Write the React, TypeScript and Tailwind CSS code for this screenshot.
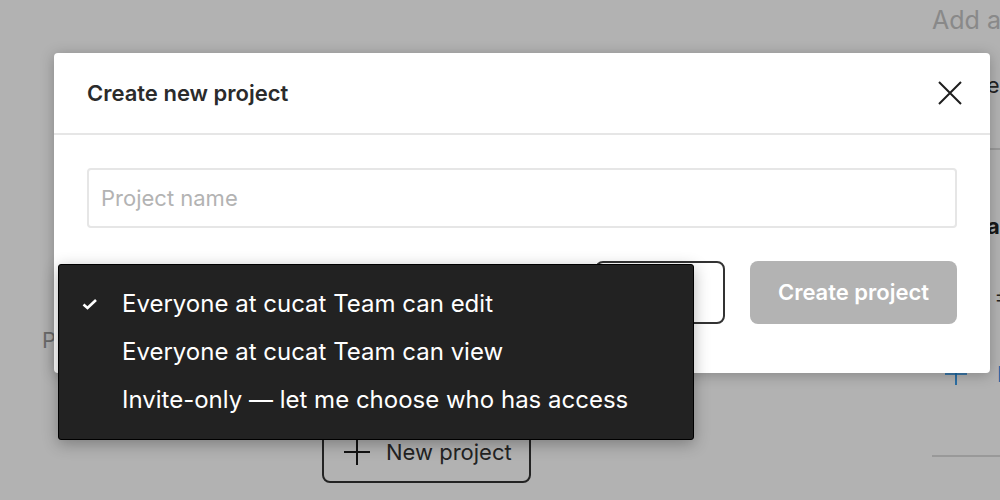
import React from 'react';

const Check = () => (
  <svg width="16" height="12" viewBox="0 0 16 12" fill="none">
    <path d="M1.5 6.5 L5.5 10 L14 2" stroke="white" strokeWidth="2.6" strokeLinejoin="miter" />
  </svg>
);

const Plus = ({ color = '#1a1a1a', size = 26 }: { color?: string; size?: number }) => (
  <svg width={size} height={size} viewBox="0 0 26 26" fill="none" className="shrink-0">
    <path d="M13 0 V26 M0 13 H26" stroke={color} strokeWidth="2" />
  </svg>
);

const CloseIcon = () => (
  <svg width="24" height="24" viewBox="0 0 24 24" fill="none">
    <path d="M1 1 L23 23 M23 1 L1 23" stroke="#1e1e1e" strokeWidth="2" />
  </svg>
);

const options = [
  { label: 'Everyone at cucat Team can edit', checked: true },
  { label: 'Everyone at cucat Team can view', checked: false },
  { label: 'Invite-only — let me choose who has access', checked: false },
];

export default function App() {
  return (
    <div
      className="relative w-[1000px] h-[500px] overflow-hidden bg-white"
      style={{ fontFamily: 'Inter, "Noto Sans", sans-serif' }}
    >
      {/* page behind the dialog */}
      <div className="flex h-full">
        <div className="flex-1 flex flex-col pt-[328px] pl-[42px]">
          <div className="text-[22px] text-[#9a9a9a] leading-[24px]">Projects</div>
          <div className="mt-[69px] ml-[280px] w-[209px] h-[62px] border-2 border-[#333] rounded-[8px] flex items-center pl-[20px] gap-[16px]">
            <Plus />
            <span className="text-[22px] text-[#333]">New project</span>
          </div>
        </div>
        <div className="w-[68px] shrink-0 flex flex-col overflow-hidden whitespace-nowrap">
          <div className="mt-[5px] text-[25px] text-[#c4c4c4] leading-[30px]">Add a description</div>
          <div className="mt-[38px] ml-[35px] text-[22px] text-[#333] leading-[24px]">Members</div>
          <div className="mt-[51px] h-[2px] bg-[#dcdcdc]" />
          <div className="mt-[64px] ml-[42px] text-[22px] font-bold text-[#222] leading-[24px]">Tab</div>
          <div className="mt-[46px] ml-[63px] text-[18px] text-[#333] leading-[24px]">±</div>
          <div className="mt-[54px] flex items-center gap-[30px] pl-[13px]">
            <Plus color="#1e8fe8" size={22} />
            <span className="text-[22px] text-[#1e8fe8] leading-[24px]">Invite</span>
          </div>
          <div className="mt-[69px] h-[2px] bg-[#dcdcdc]" />
        </div>
      </div>

      {/* overlay */}
      <div className="absolute inset-0 bg-black/30" />

      {/* dialog */}
      <div className="absolute left-[54px] top-[53px] w-[936px] h-[320px] bg-white rounded-[4px] shadow-[0_2px_14px_rgba(0,0,0,0.25)] flex flex-col">
        <div className="h-[82px] flex items-center justify-between pl-[33px] pr-[28px] border-b-2 border-[#e6e6e6]">
          <h2 className="text-[22px] font-semibold text-[#2b2b2b]">Create new project</h2>
          <CloseIcon />
        </div>
        <div className="px-[33px] pt-[33px]">
          <div className="h-[60px] border-2 border-[#e6e6e6] rounded-[4px] flex items-center pl-[12px]">
            <span className="text-[22px] text-[#b3b3b3]">Project name</span>
          </div>
          <div className="mt-[33px] flex justify-end gap-[25px]">
            <div className="w-[130px] h-[63px] border-2 border-[#333] rounded-[8px]" />
            <button className="w-[207px] h-[63px] bg-[#b3b3b3] rounded-[8px] text-white text-[22px] font-semibold">
              Create project
            </button>
          </div>
        </div>
      </div>

      {/* permissions menu */}
      <div className="absolute left-[58px] top-[264px] w-[636px] h-[176px] bg-[#222] border border-black rounded-[3px] shadow-[0_4px_16px_rgba(0,0,0,0.3)] py-[15px]">
        {options.map((o) => (
          <div key={o.label} className="h-[48px] flex items-center pl-[23px]">
            <div className="w-[40px] flex items-center">{o.checked && <Check />}</div>
            <span className="text-[24px] text-white leading-[26px]">{o.label}</span>
          </div>
        ))}
      </div>
    </div>
  );
}
